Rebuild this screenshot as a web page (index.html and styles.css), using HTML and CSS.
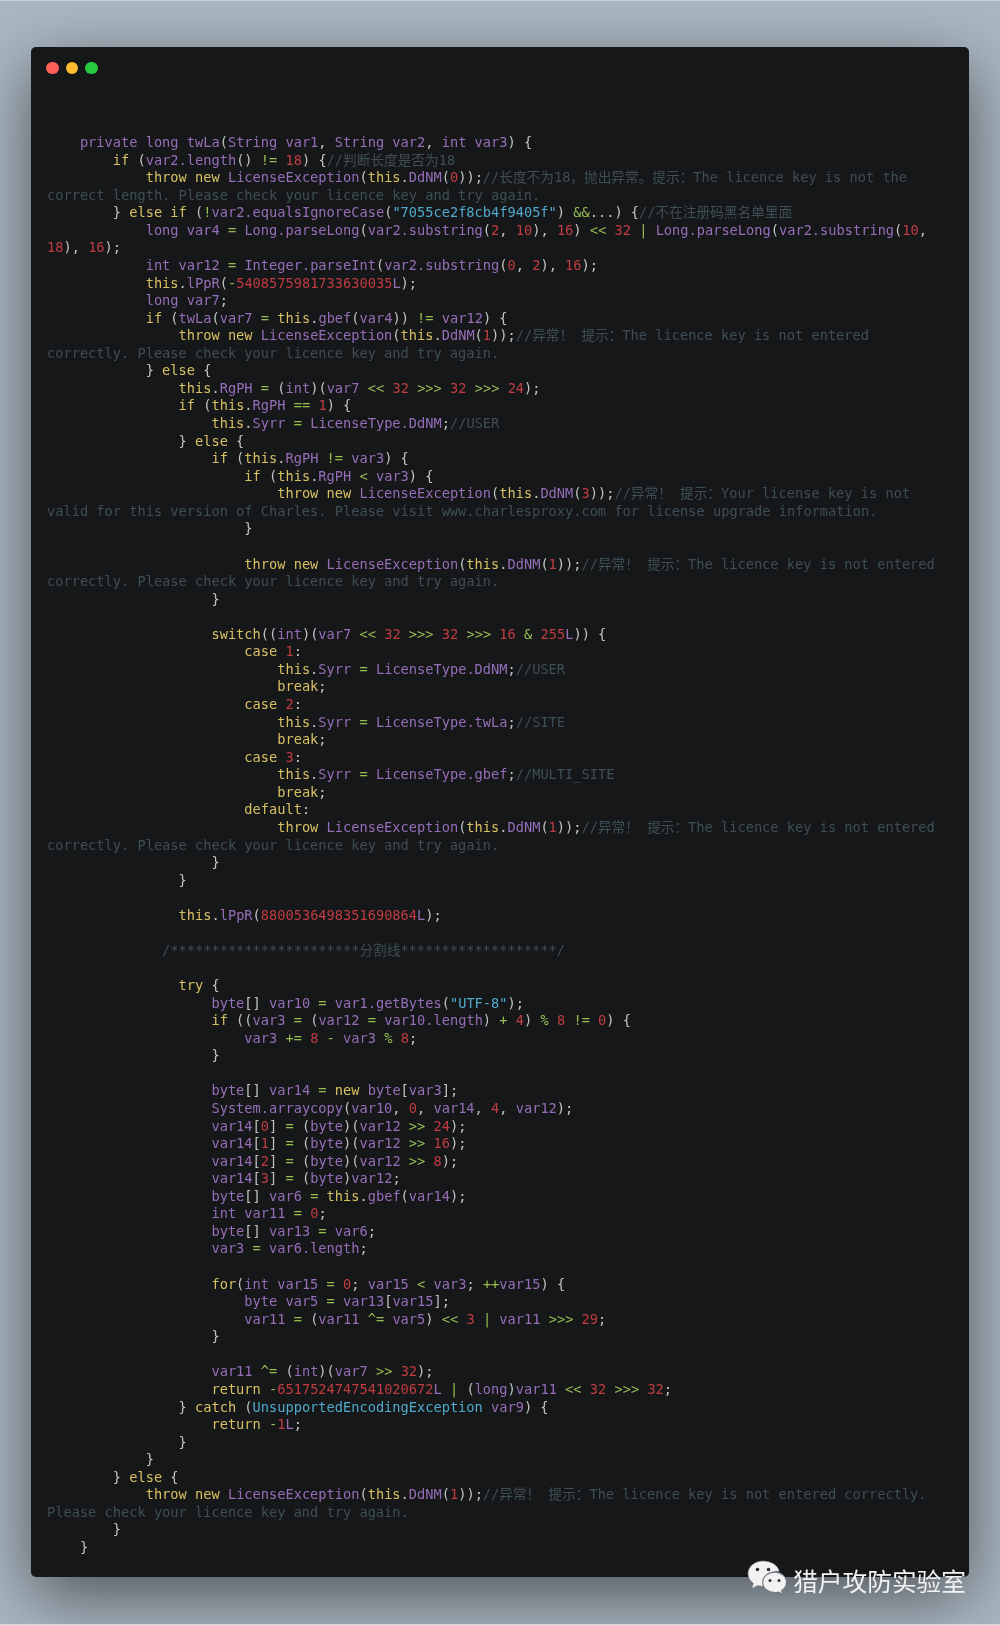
FILE: index.html
```html
<!DOCTYPE html>
<html lang="zh-CN">
<head>
<meta charset="utf-8">
<title>Code</title>
<link rel="stylesheet" href="styles.css">
</head>
<body>
<main class="page">
<section class="window">
<div class="dots"><span class="dot red"></span><span class="dot yellow"></span><span class="dot green"></span></div>
<div class="code">
<div class="line">    <i class="v">private long twLa</i>(<i class="v">String var1</i>, <i class="v">String var2</i>, <i class="v">int var3</i>) {</div>
<div class="line">        <i class="k">if</i> (<i class="v">var2.length</i>() <i class="o">!=</i> <i class="n">18</i>) {<i class="c">//判断长度是否为18</i></div>
<div class="line">            <i class="k">throw new</i> <i class="v">LicenseException</i>(<i class="k">this</i>.<i class="v">DdNM</i>(<i class="n">0</i>));<i class="c">//长度不为18&#xFF0C;抛出异常&#x3002;提示&#xFF1A;The licence key is not the</i></div>
<div class="line"><i class="c">correct length. Please check your licence key and try again.</i></div>
<div class="line">        } <i class="k">else if</i> (<i class="o">!</i><i class="v">var2.equalsIgnoreCase</i>(<i class="s">"7055ce2f8cb4f9405f"</i>) <i class="o">&amp;&amp;</i>...) {<i class="c">//不在注册码黑名单里面</i></div>
<div class="line">            <i class="v">long var4</i> <i class="o">=</i> <i class="v">Long.parseLong</i>(<i class="v">var2.substring</i>(<i class="n">2</i>, <i class="n">10</i>), <i class="n">16</i>) <i class="o">&lt;&lt;</i> <i class="n">32</i> <i class="o">|</i> <i class="v">Long.parseLong</i>(<i class="v">var2.substring</i>(<i class="n">10</i>,</div>
<div class="line"><i class="n">18</i>), <i class="n">16</i>);</div>
<div class="line">            <i class="v">int var12</i> <i class="o">=</i> <i class="v">Integer.parseInt</i>(<i class="v">var2.substring</i>(<i class="n">0</i>, <i class="n">2</i>), <i class="n">16</i>);</div>
<div class="line">            <i class="k">this</i>.<i class="v">lPpR</i>(<i class="o">-</i><i class="n">5408575981733630035</i><i class="v">L</i>);</div>
<div class="line">            <i class="v">long var7</i>;</div>
<div class="line">            <i class="k">if</i> (<i class="v">twLa</i>(<i class="v">var7</i> <i class="o">=</i> <i class="k">this</i>.<i class="v">gbef</i>(<i class="v">var4</i>)) <i class="o">!=</i> <i class="v">var12</i>) {</div>
<div class="line">                <i class="k">throw new</i> <i class="v">LicenseException</i>(<i class="k">this</i>.<i class="v">DdNM</i>(<i class="n">1</i>));<i class="c">//异常&#xFF01; 提示&#xFF1A;The licence key is not entered</i></div>
<div class="line"><i class="c">correctly. Please check your licence key and try again.</i></div>
<div class="line">            } <i class="k">else</i> {</div>
<div class="line">                <i class="k">this</i>.<i class="v">RgPH</i> <i class="o">=</i> (<i class="v">int</i>)(<i class="v">var7</i> <i class="o">&lt;&lt;</i> <i class="n">32</i> <i class="o">&gt;&gt;&gt;</i> <i class="n">32</i> <i class="o">&gt;&gt;&gt;</i> <i class="n">24</i>);</div>
<div class="line">                <i class="k">if</i> (<i class="k">this</i>.<i class="v">RgPH</i> <i class="o">==</i> <i class="n">1</i>) {</div>
<div class="line">                    <i class="k">this</i>.<i class="v">Syrr</i> <i class="o">=</i> <i class="v">LicenseType.DdNM</i>;<i class="c">//USER</i></div>
<div class="line">                } <i class="k">else</i> {</div>
<div class="line">                    <i class="k">if</i> (<i class="k">this</i>.<i class="v">RgPH</i> <i class="o">!=</i> <i class="v">var3</i>) {</div>
<div class="line">                        <i class="k">if</i> (<i class="k">this</i>.<i class="v">RgPH</i> <i class="o">&lt;</i> <i class="v">var3</i>) {</div>
<div class="line">                            <i class="k">throw new</i> <i class="v">LicenseException</i>(<i class="k">this</i>.<i class="v">DdNM</i>(<i class="n">3</i>));<i class="c">//异常&#xFF01; 提示&#xFF1A;Your license key is not</i></div>
<div class="line"><i class="c">valid for this version of Charles. Please visit www.charlesproxy.com for license upgrade information.</i></div>
<div class="line">                        }</div>
<div class="line"></div>
<div class="line">                        <i class="k">throw new</i> <i class="v">LicenseException</i>(<i class="k">this</i>.<i class="v">DdNM</i>(<i class="n">1</i>));<i class="c">//异常&#xFF01; 提示&#xFF1A;The licence key is not entered</i></div>
<div class="line"><i class="c">correctly. Please check your licence key and try again.</i></div>
<div class="line">                    }</div>
<div class="line"></div>
<div class="line">                    <i class="k">switch</i>((<i class="v">int</i>)(<i class="v">var7</i> <i class="o">&lt;&lt;</i> <i class="n">32</i> <i class="o">&gt;&gt;&gt;</i> <i class="n">32</i> <i class="o">&gt;&gt;&gt;</i> <i class="n">16</i> <i class="o">&amp;</i> <i class="n">255</i><i class="v">L</i>)) {</div>
<div class="line">                        <i class="k">case</i> <i class="n">1</i>:</div>
<div class="line">                            <i class="k">this</i>.<i class="v">Syrr</i> <i class="o">=</i> <i class="v">LicenseType.DdNM</i>;<i class="c">//USER</i></div>
<div class="line">                            <i class="k">break</i>;</div>
<div class="line">                        <i class="k">case</i> <i class="n">2</i>:</div>
<div class="line">                            <i class="k">this</i>.<i class="v">Syrr</i> <i class="o">=</i> <i class="v">LicenseType.twLa</i>;<i class="c">//SITE</i></div>
<div class="line">                            <i class="k">break</i>;</div>
<div class="line">                        <i class="k">case</i> <i class="n">3</i>:</div>
<div class="line">                            <i class="k">this</i>.<i class="v">Syrr</i> <i class="o">=</i> <i class="v">LicenseType.gbef</i>;<i class="c">//MULTI_SITE</i></div>
<div class="line">                            <i class="k">break</i>;</div>
<div class="line">                        <i class="k">default</i>:</div>
<div class="line">                            <i class="k">throw</i> <i class="v">LicenseException</i>(<i class="k">this</i>.<i class="v">DdNM</i>(<i class="n">1</i>));<i class="c">//异常&#xFF01; 提示&#xFF1A;The licence key is not entered</i></div>
<div class="line"><i class="c">correctly. Please check your licence key and try again.</i></div>
<div class="line">                    }</div>
<div class="line">                }</div>
<div class="line"></div>
<div class="line">                <i class="k">this</i>.<i class="v">lPpR</i>(<i class="n">8800536498351690864</i><i class="v">L</i>);</div>
<div class="line"></div>
<div class="line">              <i class="c">/***********************分割线*******************/</i></div>
<div class="line"></div>
<div class="line">                <i class="k">try</i> {</div>
<div class="line">                    <i class="v">byte</i>[] <i class="v">var10</i> <i class="o">=</i> <i class="v">var1.getBytes</i>(<i class="s">"UTF-8"</i>);</div>
<div class="line">                    <i class="k">if</i> ((<i class="v">var3</i> <i class="o">=</i> (<i class="v">var12</i> <i class="o">=</i> <i class="v">var10.length</i>) <i class="o">+</i> <i class="n">4</i>) <i class="o">%</i> <i class="n">8</i> <i class="o">!=</i> <i class="n">0</i>) {</div>
<div class="line">                        <i class="v">var3</i> <i class="o">+=</i> <i class="n">8</i> <i class="o">-</i> <i class="v">var3</i> <i class="o">%</i> <i class="n">8</i>;</div>
<div class="line">                    }</div>
<div class="line"></div>
<div class="line">                    <i class="v">byte</i>[] <i class="v">var14</i> <i class="o">=</i> <i class="k">new</i> <i class="v">byte</i>[<i class="v">var3</i>];</div>
<div class="line">                    <i class="v">System.arraycopy</i>(<i class="v">var10</i>, <i class="n">0</i>, <i class="v">var14</i>, <i class="n">4</i>, <i class="v">var12</i>);</div>
<div class="line">                    <i class="v">var14</i>[<i class="n">0</i>] <i class="o">=</i> (<i class="v">byte</i>)(<i class="v">var12</i> <i class="o">&gt;&gt;</i> <i class="n">24</i>);</div>
<div class="line">                    <i class="v">var14</i>[<i class="n">1</i>] <i class="o">=</i> (<i class="v">byte</i>)(<i class="v">var12</i> <i class="o">&gt;&gt;</i> <i class="n">16</i>);</div>
<div class="line">                    <i class="v">var14</i>[<i class="n">2</i>] <i class="o">=</i> (<i class="v">byte</i>)(<i class="v">var12</i> <i class="o">&gt;&gt;</i> <i class="n">8</i>);</div>
<div class="line">                    <i class="v">var14</i>[<i class="n">3</i>] <i class="o">=</i> (<i class="v">byte</i>)<i class="v">var12</i>;</div>
<div class="line">                    <i class="v">byte</i>[] <i class="v">var6</i> <i class="o">=</i> <i class="k">this</i>.<i class="v">gbef</i>(<i class="v">var14</i>);</div>
<div class="line">                    <i class="v">int var11</i> <i class="o">=</i> <i class="n">0</i>;</div>
<div class="line">                    <i class="v">byte</i>[] <i class="v">var13</i> <i class="o">=</i> <i class="v">var6</i>;</div>
<div class="line">                    <i class="v">var3</i> <i class="o">=</i> <i class="v">var6.length</i>;</div>
<div class="line"></div>
<div class="line">                    <i class="k">for</i>(<i class="v">int var15</i> <i class="o">=</i> <i class="n">0</i>; <i class="v">var15</i> <i class="o">&lt;</i> <i class="v">var3</i>; <i class="o">++</i><i class="v">var15</i>) {</div>
<div class="line">                        <i class="v">byte var5</i> <i class="o">=</i> <i class="v">var13</i>[<i class="v">var15</i>];</div>
<div class="line">                        <i class="v">var11</i> <i class="o">=</i> (<i class="v">var11</i> <i class="o">^=</i> <i class="v">var5</i>) <i class="o">&lt;&lt;</i> <i class="n">3</i> <i class="o">|</i> <i class="v">var11</i> <i class="o">&gt;&gt;&gt;</i> <i class="n">29</i>;</div>
<div class="line">                    }</div>
<div class="line"></div>
<div class="line">                    <i class="v">var11</i> <i class="o">^=</i> (<i class="v">int</i>)(<i class="v">var7</i> <i class="o">&gt;&gt;</i> <i class="n">32</i>);</div>
<div class="line">                    <i class="k">return</i> <i class="o">-</i><i class="n">6517524747541020672</i><i class="v">L</i> <i class="o">|</i> (<i class="v">long</i>)<i class="v">var11</i> <i class="o">&lt;&lt;</i> <i class="n">32</i> <i class="o">&gt;&gt;&gt;</i> <i class="n">32</i>;</div>
<div class="line">                } <i class="k">catch</i> (<i class="s">UnsupportedEncodingException</i> <i class="v">var9</i>) {</div>
<div class="line">                    <i class="k">return</i> <i class="o">-</i><i class="n">1</i><i class="v">L</i>;</div>
<div class="line">                }</div>
<div class="line">            }</div>
<div class="line">        } <i class="k">else</i> {</div>
<div class="line">            <i class="k">throw new</i> <i class="v">LicenseException</i>(<i class="k">this</i>.<i class="v">DdNM</i>(<i class="n">1</i>));<i class="c">//异常&#xFF01; 提示&#xFF1A;The licence key is not entered correctly.</i></div>
<div class="line"><i class="c">Please check your licence key and try again.</i></div>
<div class="line">        }</div>
<div class="line">    }</div>
</div>
</section>
<div class="mark">
<svg class="mark-icon" viewBox="0 0 40 36" aria-hidden="true">
<path class="bubble-back" d="M16 1C7.7 1 1 6.600 1 13.600c0 3.900 2.100 7.400 5.400 9.700L5 28.400l5.700-3c1.700.5 3.500.8 5.300.8 1 0 1.800-.1 2.700-.2-.4-1.100-.6-2.200-.6-3.400 0-6.300 6-11.400 13.400-11.400h.8C30.700 5.200 24 1 16 1z"/>
<path class="bubble-front" d="M39.500 22.400c0-5.700-5.500-10.300-11.800-10.300-6.700 0-12 4.600-12 10.300s5.300 10.300 12 10.300c1.400 0 2.800-.2 4.100-.6l3.800 2.300-1-3.800c3-2.100 4.900-4.900 4.900-8.200z"/>
<circle class="eye" cx="10.500" cy="9.500" r="1.800"/>
<circle class="eye" cx="21.500" cy="9.500" r="1.800"/>
<circle class="eye" cx="23" cy="20.500" r="1.500"/>
<circle class="eye" cx="32" cy="20.500" r="1.500"/>
</svg>
<span class="mark-text">猎户攻防实验室</span>
</div>
</main>
</body>
</html>
```
FILE: styles.css
```css
html, body {
  margin: 0;
  padding: 0;
}

.page {
  box-sizing: border-box;
  position: relative;
  height: 1625px;
  overflow: hidden;
  padding: 46px 31px 0;
  background: #abb8c3;
  border-top: 1px solid #c9d1d8;
  border-bottom: 1px solid #d5dbe0;
}

.window {
  box-sizing: border-box;
  height: 1530px;
  background: #151718;
  border-radius: 5px;
  box-shadow: 0 20px 68px rgba(0, 0, 0, 0.55);
  padding: 14.5px 15px 0;
}

.dots {
  display: flex;
  gap: 7px;
  height: 72.5px;
}

.dot {
  width: 12.6px;
  height: 12.6px;
  border-radius: 50%;
}

.red { background: #ff5f56; }
.yellow { background: #ffbd2e; }
.green { background: #27c93f; }

.code {
  padding-left: 1px;
  color: #cfd2d1;
  font-family: "DejaVu Sans Mono", "Noto Sans CJK SC", monospace;
  font-size: 13.66px;
  line-height: 17.57px;
  text-spacing-trim: space-all;
  opacity: 0.93;
  filter: blur(0.5px);
}

.line {
  height: 17.57px;
  white-space: pre;
}

.code i { font-style: normal; }
.k { color: #e6cd69; }
.v { color: #a074c4; }
.n { color: #cd3f45; }
.o { color: #9fca56; }
.s { color: #55b5db; }
.c { color: #41535b; }

.mark {
  position: absolute;
  right: 34px;
  bottom: 27px;
  display: flex;
  align-items: flex-start;
  gap: 6px;
  color: #f1f2f2;
  filter: blur(0.4px);
}

.mark-icon {
  width: 40px;
  height: 36px;
}

.bubble-back { fill: #f2f2f2; stroke: #7d868e; stroke-width: 0.6; }
.bubble-front { fill: #f2f2f2; stroke: #737c84; stroke-width: 1.2; }
.eye { fill: #2c3034; }

.mark-text {
  margin-top: 3px;
  font-family: "Noto Sans CJK SC", sans-serif;
  font-size: 24.7px;
  line-height: 34px;
}
```
